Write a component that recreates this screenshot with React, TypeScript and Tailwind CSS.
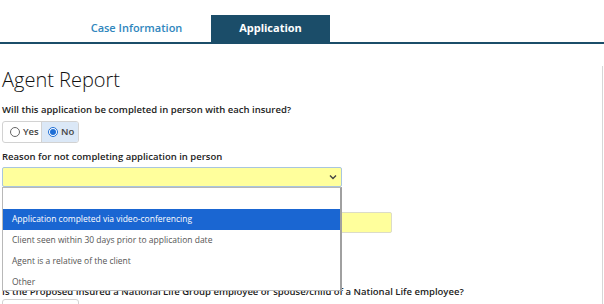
import React from 'react'

const options = [
  'Application completed via video-conferencing',
  'Client seen within 30 days prior to application date',
  'Agent is a relative of the client',
  'Other',
]

const Radio: React.FC<{ checked?: boolean }> = ({ checked }) => (
  <span
    className={
      checked
        ? 'w-[10px] h-[10px] rounded-full border border-[#1f6fd6] bg-white flex items-center justify-center'
        : 'w-[10px] h-[10px] rounded-full border border-[#666] bg-white'
    }
  >
    {checked && <span className="w-[6px] h-[6px] rounded-full bg-[#1f6fd6]" />}
  </span>
)

const App: React.FC = () => {
  return (
    <div className="w-[604px] h-[304px] overflow-hidden bg-white font-['Open_Sans',sans-serif] text-[#222]">
      {/* tabs */}
      <div className="h-[44px] pt-[15px] pl-[77px] flex gap-[15px] border-b-2 border-[#1b4d69]">
        <div className="w-[119px] h-[27px] flex items-center justify-center text-[11px] font-semibold text-[#2f86bd]">
          Case Information
        </div>
        <div className="w-[119px] h-[27px] flex items-center justify-center text-[11px] font-bold text-white bg-[#1b4d69]">
          Application
        </div>
      </div>

      <div className="w-[603px] h-[260px] border-r border-[#d6d6d6] px-[2px] relative">
        <h1 className="mt-[22px] h-[28px] text-[20px] leading-[28px] font-light text-[#111]">Agent Report</h1>

        <div className="mt-[9px] text-[9.5px] leading-[14px] font-semibold">
          Will this application be completed in person with each insured?
        </div>

        <div className="mt-[4px] w-[77px] h-[22px] flex border border-[#d2d2d2] rounded-[3px] overflow-hidden text-[9.5px] font-semibold text-[#444]">
          <div className="w-[39px] flex items-center gap-[3px] pl-[7px] border-r border-[#d2d2d2]">
            <Radio />
            Yes
          </div>
          <div className="flex-1 flex items-center gap-[3px] pl-[6px] bg-[#dbe8f7]">
            <Radio checked />
            No
          </div>
        </div>

        <div className="mt-[7px] text-[9.5px] leading-[14px] font-semibold">
          Reason for not completing application in person
        </div>

        <div className="relative mt-[3px]">
          <div className="w-[340px] h-[20px] bg-[#ffff9c] border border-[#a9c6de] rounded-[2px] flex items-center justify-end pr-[4px]">
            <svg width="8" height="6" viewBox="0 0 8 6">
              <polyline points="1,1.5 4,4.5 7,1.5" fill="none" stroke="#444" strokeWidth="1.4" />
            </svg>
          </div>

          {/* open dropdown list */}
          <div className="absolute left-0 top-[20px] z-10 w-[340px] h-[104px] overflow-hidden bg-white border border-[#b8b8b8] border-r-2 border-r-[#a0a0a0] text-[8.5px] text-[#555]">
            <div className="h-[21px]" />
            {options.map((o, i) => (
              <div
                key={o}
                className={
                  i === 0
                    ? 'h-[21px] flex items-center pl-[9px] bg-[#1a66d2] text-white'
                    : 'h-[21px] flex items-center pl-[9px]'
                }
              >
                {o}
              </div>
            ))}
          </div>
        </div>

        <div className="mt-[25px] w-[390px] h-[21px] bg-[#ffff9c] border border-[#dcdcc8] rounded-[2px]" />

        <div className="mt-[52px] text-[9.5px] leading-[14px] font-semibold whitespace-nowrap">
          Is the Proposed Insured a National Life Group employee or spouse/child of a National Life employee?
        </div>
        <div className="w-[77px] h-[22px] border border-[#d2d2d2] rounded-[3px]" />
      </div>
    </div>
  )
}

export default App
